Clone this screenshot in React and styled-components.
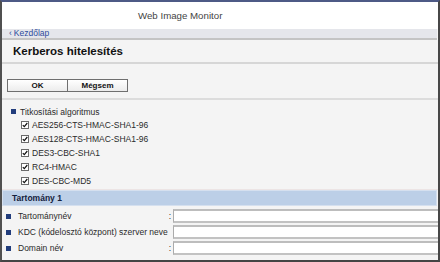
import React from "react";
import styled, { createGlobalStyle } from "styled-components";

const GlobalStyle = createGlobalStyle`
  html, body {
    margin: 0;
    padding: 0;
    background: #fff;
  }
  body {
    font-family: "Liberation Sans", Arial, sans-serif;
  }
`;

const Frame = styled.div`
  width: 440px;
  height: 262px;
  box-sizing: border-box;
  border-top: 2px solid #4e5a86;
  border-left: 2px solid #505050;
  border-right: 2px solid #474747;
  border-bottom: 2px solid #444;
  background: #f4f4f4;
  display: flex;
  flex-direction: column;
  overflow: hidden;
`;

const Header = styled.header`
  height: 27px;
  background: #fff;
  display: flex;
  align-items: center;
  padding-left: 136px;
  font-size: 9.7px;
  color: #444;
`;

const Breadcrumb = styled.nav`
  height: 9px;
  background: #e5e6eb;
  margin-right: 1px;
  padding-left: 7px;
  display: flex;
  align-items: center;
  gap: 2px;
  font-size: 8.5px;
  line-height: 9px;
  color: #2d4b9c;
  border-bottom: 2px solid #c4c4c4;
`;

const Title = styled.h1`
  margin: 0;
  height: 22px;
  padding-left: 11px;
  display: flex;
  align-items: center;
  font-size: 11.5px;
  font-weight: bold;
  color: #111;
  border-bottom: 2px solid #d6d6d6;
`;

const ButtonBar = styled.div`
  display: flex;
  padding: 15px 0 6px 5px;
  border-bottom: 2px solid #dcdcdc;
`;

const Button = styled.button`
  width: 61px;
  height: 13px;
  margin: 0 0 0 ${({ $joined }) => ($joined ? "-1px" : "0")};
  padding: 0;
  box-sizing: border-box;
  border: 1px solid #6f6f6f;
  background: linear-gradient(#ffffff, #ececec);
  font-family: "Liberation Sans", Arial, sans-serif;
  font-size: 8px;
  font-weight: bold;
  line-height: 11px;
  color: #111;
`;

const Section = styled.section`
  padding: 5px 0 1px 9px;
  border-bottom: 1px solid #ece4e4;
`;

const Label = styled.div`
  height: ${({ $h }) => $h || 13}px;
  display: flex;
  align-items: center;
  gap: ${({ $gap }) => $gap || 4}px;
  padding-left: ${({ $indent }) => $indent || 0}px;
  font-size: 8.5px;
  color: #2a2a2a;
  white-space: nowrap;
`;

const Bullet = styled.span`
  width: 5px;
  height: 5px;
  flex: none;
  background: #223d7c;
`;

const Band = styled.div`
  height: 16px;
  box-sizing: border-box;
  margin-right: 1px;
  padding-left: 9px;
  display: flex;
  align-items: center;
  background: #bccfe7;
  border: 1px solid #d5e0ef;
  font-size: 8.5px;
  font-weight: bold;
  color: #14213d;
`;

const Rows = styled.div`
  display: flex;
  flex-direction: column;
  gap: 2px;
  padding-top: 3px;
`;

const Row = styled.div`
  display: flex;
  height: 14px;
`;

const RowLabel = styled.div`
  width: 171px;
  flex: none;
  display: flex;
  align-items: center;
  gap: 7px;
  padding-left: 4px;
  box-sizing: border-box;
  font-size: 8.5px;
  color: #2a2a2a;
  white-space: nowrap;
`;

const Colon = styled.span`
  margin-left: auto;
  margin-right: 2px;
`;

const Field = styled.input`
  flex: 1;
  min-width: 0;
  height: 14px;
  margin: 0;
  padding: 0;
  box-sizing: border-box;
  border: 1px solid #ababab;
  border-top: 2px solid #bdbdbd;
  border-bottom: 2px solid #c2c2c2;
  border-right: none;
  background: #fff;
  outline: none;
`;

const CheckIcon = () => (
  <svg width="8" height="8" viewBox="0 0 8 8" style={{ flex: "none" }}>
    <rect x="0.5" y="0.5" width="7" height="7" fill="#fff" stroke="#6a6a6a" />
    <path d="M1.8 4.1 L3.3 5.7 L6.3 2" fill="none" stroke="#111" strokeWidth="1.2" />
  </svg>
);

const algorithms = [
  "AES256-CTS-HMAC-SHA1-96",
  "AES128-CTS-HMAC-SHA1-96",
  "DES3-CBC-SHA1",
  "RC4-HMAC",
  "DES-CBC-MD5",
];

const fields = ["Tartománynév", "KDC (kódelosztó központ) szerver neve", "Domain név"];

export default function App() {
  return (
    <>
      <GlobalStyle />
      <Frame>
        <Header>Web Image Monitor</Header>
        <Breadcrumb>
          <span>‹</span>
          <span>Kezdőlap</span>
        </Breadcrumb>
        <Title>Kerberos hitelesítés</Title>
        <ButtonBar>
          <Button>OK</Button>
          <Button $joined>Mégsem</Button>
        </ButtonBar>
        <Section>
          <Label>
            <Bullet />
            Titkosítási algoritmus
          </Label>
          {algorithms.map((a) => (
            <Label key={a} $h={14} $indent={10} $gap={3}>
              <CheckIcon />
              {a}
            </Label>
          ))}
        </Section>
        <Band>Tartomány 1</Band>
        <Rows>
          {fields.map((f) => (
            <Row key={f}>
              <RowLabel>
                <Bullet />
                {f}
                <Colon>:</Colon>
              </RowLabel>
              <Field type="text" />
            </Row>
          ))}
        </Rows>
      </Frame>
    </>
  );
}
